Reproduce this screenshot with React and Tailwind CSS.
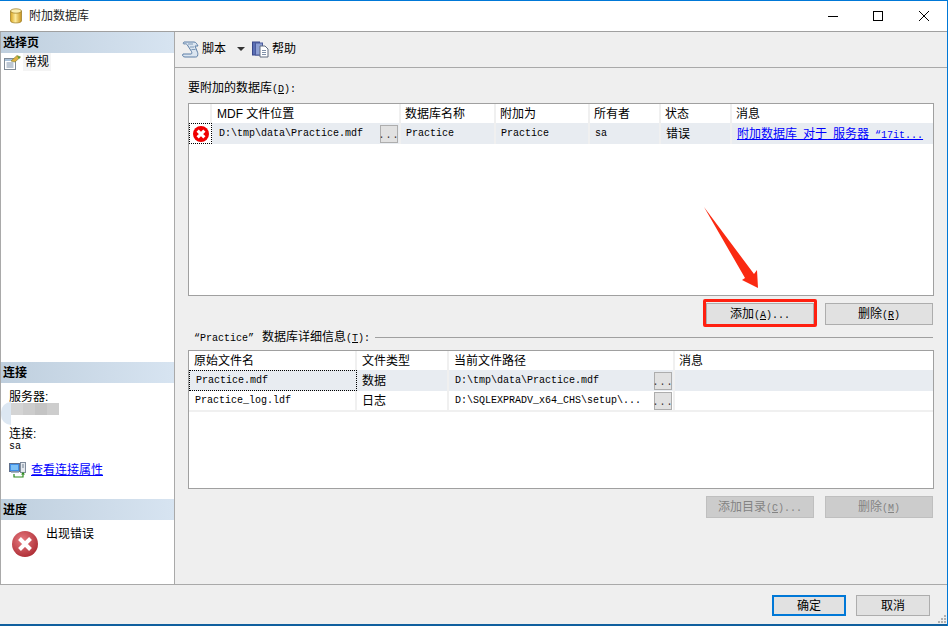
const sans = "font-['Liberation_Sans','Noto_Sans_CJK_SC',sans-serif]";
const mono = "font-['Liberation_Mono','Noto_Sans_CJK_SC',monospace] text-[10px] whitespace-pre";

function ErrorIcon({ size = 18, flat = false }) {
  return (
    <svg width={size} height={size} viewBox="0 0 26 26">
      <defs>
        <radialGradient id="err" cx="40%" cy="35%" r="75%">
          <stop offset="0%" stopColor="#e77a80" />
          <stop offset="100%" stopColor="#a8262e" />
        </radialGradient>
      </defs>
      <circle cx="13" cy="13" r="13" fill={flat ? "#f00000" : "url(#err)"} />
      <path d="M7.5 7.5 L18.5 18.5 M18.5 7.5 L7.5 18.5" stroke="#fff" strokeWidth={flat ? 5 : 4} />
    </svg>
  );
}

function DbIcon() {
  return (
    <svg width="12" height="16" viewBox="0 0 12 16">
      <defs>
        <linearGradient id="db" x1="0" x2="1" y1="0" y2="0">
          <stop offset="0%" stopColor="#d9a520" />
          <stop offset="45%" stopColor="#fdeb9c" />
          <stop offset="100%" stopColor="#c8921a" />
        </linearGradient>
      </defs>
      <path d="M0.5 3 V13 C0.5 15.6 11.5 15.6 11.5 13 V3 Z" fill="url(#db)" stroke="#9a7a20" strokeWidth="0.7" />
      <ellipse cx="6" cy="3" rx="5.5" ry="2.2" fill="#fbeeb0" stroke="#9a7a20" strokeWidth="0.7" />
    </svg>
  );
}

function ScriptIcon() {
  return (
    <svg width="17" height="17" viewBox="0 0 17 17">
      <path d="M2 1 H12 C14 1 15 3 16 5 H13 L15 10 C16 12 16 13 15.5 15 C15 16 14 16 13 16 H3 C1 16 0 14.5 1 13 H9 C10 13 10 11.5 9.5 10.5 L6 5 C5 3 4 2.5 2 3 C1 3 1 1.5 2 1 Z" fill="#dbe5f0" stroke="#5d7fa6" strokeWidth="1" />
      <path d="M6 3 H11 M8 6 H12 M9.5 8.5 H13.5" stroke="#7f9ab8" strokeWidth="1" />
    </svg>
  );
}

function HelpIcon() {
  return (
    <svg width="17" height="17" viewBox="0 0 17 17">
      <rect x="0.5" y="1" width="7" height="13" fill="#5a6fb5" stroke="#38478a" />
      <rect x="3.5" y="2" width="7" height="12" fill="#8ea0d4" stroke="#4a5a9c" />
      <path d="M8 5 H13 L16 8 V16 H8 Z" fill="#fff" stroke="#606c80" />
      <path d="M10 9.5 H14 M10 11.5 H14 M10 13.5 H14" stroke="#8090a8" />
    </svg>
  );
}

function PageIcon() {
  return (
    <svg width="17" height="15" viewBox="0 0 17 15">
      <rect x="0.5" y="3.5" width="11" height="11" fill="#fff" stroke="#7f8a96" />
      <rect x="1" y="4" width="10" height="2" fill="#a8c0d8" />
      <path d="M2.5 8 H9.5 M2.5 10 H9.5 M2.5 12 H9.5" stroke="#7a8fa8" />
      <path d="M7 6 L13 0.5 L16.5 2 L11 7 Z" fill="#e0b040" stroke="#7c8030" strokeWidth="0.6" />
      <path d="M13 1 L16.5 2 L15 4 Z" fill="#5c9a3c" />
    </svg>
  );
}

function ConnIcon() {
  return (
    <svg width="17" height="16" viewBox="0 0 17 16">
      <rect x="0.5" y="1.5" width="10" height="8" fill="#3f8fe8" stroke="#60708c" />
      <rect x="2" y="3" width="7" height="5" fill="#7cc0f6" />
      <rect x="2" y="9.5" width="8" height="1.5" fill="#a8b4c4" />
      <rect x="11.5" y="0.5" width="5" height="10" fill="#e4e8ee" stroke="#808c9c" />
      <path d="M13 3 H15 M13 5 H15" stroke="#708090" />
      <path d="M5 12 V15 H14 V11" fill="none" stroke="#2e8b1e" strokeWidth="1.2" />
      <path d="M12 12.5 L14 10 L16 12.5 Z" fill="#2e8b1e" />
    </svg>
  );
}

function Win({ type }) {
  return (
    <svg width="12" height="12" viewBox="0 0 12 12" fill="none" stroke="#000" strokeWidth="1">
      {type === "min" && <path d="M1 6.5 H11" />}
      {type === "max" && <rect x="1.5" y="1.5" width="9" height="9" />}
      {type === "close" && <path d="M1 1 L11 11 M11 1 L1 11" />}
    </svg>
  );
}

function SideHead({ children }) {
  return (
    <div className="h-[21px] px-[2px] flex items-center text-[12px] font-bold text-black bg-gradient-to-r from-[#bfcfde] to-[#d7e4f1]">
      {children}
    </div>
  );
}

function DotsBtn() {
  return (
    <div className="w-[18px] h-[18px] shrink-0 bg-[#e1e1e1] border border-[#adadad] flex items-end justify-center text-[10px] leading-[12px] tracking-[1px] text-[#333]">
      ...
    </div>
  );
}

function Btn({ children, disabled, className = "" }) {
  return (
    <div
      className={
        "h-[22px] w-[108px] flex items-center justify-center text-[12px] border " +
        (disabled
          ? "bg-[#cccccc] border-[#bfbfbf] text-[#838383] "
          : "bg-[#e1e1e1] border-[#adadad] text-black ") +
        className
      }
    >
      <span>{children}</span>
    </div>
  );
}

function Key({ k, tail = "" }) {
  return (
    <span className={mono}>
      (<span className="underline">{k}</span>){tail}
    </span>
  );
}

function Cell({ w, children, border = true, pad = "pl-[5px]", cls = "" }) {
  return (
    <div
      className={
        "h-full shrink-0 flex items-center overflow-hidden whitespace-nowrap " +
        pad + " " + (border ? "border-r-2 border-[#f0f0f0] " : "") + cls
      }
      style={{ width: w }}
    >
      {children}
    </div>
  );
}

const topCols = [23, 189, 95, 94, 71, 71, 202];
const botCols = [168, 92, 226, 259];

export default function App() {
  return (
    <div className={"relative w-[948px] h-[626px] overflow-hidden bg-[#efefef] text-black flex flex-col border-t border-r border-[#0078d7] " + sans}>
      {/* title bar */}
      <div className="h-[31px] bg-white flex items-center shrink-0 border-b border-[#a0a0a0]">
        <div className="w-[29px] pl-[10px] flex items-center"><DbIcon /></div>
        <div className="text-[12px] text-[#222]">附加数据库</div>
        <div className="ml-auto flex items-center">
          <div className="w-[46px] flex justify-center -mr-[1px]"><Win type="min" /></div>
          <div className="w-[46px] flex justify-center"><Win type="max" /></div>
          <div className="w-[46px] flex justify-center"><Win type="close" /></div>
        </div>
      </div>

      <div className="flex flex-1 min-h-0">
        {/* sidebar */}
        <div className="w-[175px] shrink-0 bg-white border-l border-r border-b border-[#a9a9a9] flex flex-col">
          <SideHead>选择页</SideHead>
          <div className="h-[309px] pl-[3px] pt-[1px]">
            <div className="flex items-center gap-[2px] h-[16px] text-[12px]">
              <PageIcon />
              <span className="bg-[#f4f4f4] px-[2px]">常规</span>
            </div>
          </div>
          <SideHead>连接</SideHead>
          <div className="h-[116px] relative">
            <div className="pl-[8px] pt-[7px] text-[12px] leading-[14px]">服务器:</div>
            <div className="ml-[10px] -mt-[1px] h-[12px] w-[48px] flex relative">
              <div className="w-[12px] bg-[#d4d4d4]" />
              <div className="w-[12px] bg-[#cccccc]" />
              <div className="w-[12px] bg-[#c4c4c4]" />
              <div className="w-[12px] bg-[#cdcdcd]" />
            </div>
            <div className="absolute left-0 top-[19px] w-[10px] h-[23px] rounded-l-full bg-[#dce7f2]" />
            <div className="pl-[8px] mt-[12px] text-[12px] leading-[14px]">连接:</div>
            <div className={"pl-[8px] leading-[12px] " + mono}>sa</div>
            <div className="pl-[8px] mt-[8px] flex items-center gap-[5px] text-[12px] text-[#0000ff] underline">
              <ConnIcon />
              <span>查看连接属性</span>
            </div>
          </div>
          <SideHead>进度</SideHead>
          <div className="flex-1 flex pl-[11px] pt-[11px] gap-[8px]">
            <ErrorIcon size={26} />
            <div className="text-[12px] leading-[14px] -mt-[4px]">出现错误</div>
          </div>
        </div>

        {/* main */}
        <div className="flex-1 min-w-0 flex flex-col border-b border-[#a9a9a9]">
          <div className="h-[36px] shrink-0 border-b border-[#a9a9a9] flex items-center pl-[7px] text-[12px] pb-[1px]">
            <ScriptIcon />
            <span className="ml-[3px]">脚本</span>
            <span className="ml-[11px] w-0 h-0 border-x-[4px] border-x-transparent border-t-[4px] border-t-[#333]" />
            <span className="ml-[7px]"><HelpIcon /></span>
            <span className="ml-[3px]">帮助</span>
          </div>

          <div className="flex-1 pl-[13px] pr-[14px] flex flex-col">
            <div className="h-[35px] flex items-end pb-[6px] text-[12px] leading-[14px]">
              <span>要附加的数据库<Key k="D" tail=":" /></span>
            </div>

            <div className="h-[193px] w-[746px] bg-white border border-[#a0a0a0] flex flex-col shrink-0 text-[12px]">
              <div className="h-[19px] flex shrink-0">
                {["", "MDF 文件位置", "数据库名称", "附加为", "所有者", "状态", "消息"].map((h, i) => (
                  <Cell key={i} w={topCols[i]} pad={i === 1 ? "pl-[5px]" : "pl-[4px]"} border={i < 6}>{h}</Cell>
                ))}
              </div>
              <div className="h-[21px] flex shrink-0 bg-[#e8ecf1]">
                <div className="w-[23px] h-full shrink-0 bg-white border border-dotted border-black flex items-center justify-center">
                  <ErrorIcon size={16} flat />
                </div>
                <Cell w={189} pad="pl-[7px]" cls={"justify-between pr-[1px] " + mono}>
                  <span>D:\tmp\data\Practice.mdf</span>
                  <DotsBtn />
                </Cell>
                <Cell w={95} cls={mono}>Practice</Cell>
                <Cell w={94} cls={mono}>Practice</Cell>
                <Cell w={71} cls={mono}>sa</Cell>
                <Cell w={71}>错误</Cell>
                <Cell w={200} border={false} cls="text-[#0000ff]">
                  <span className="underline">
                    附加数据库<span className={mono}> </span>对于<span className={mono}> </span>服务器<span className={mono}> “17it...</span>
                  </span>
                </Cell>
              </div>
            </div>

            <div className="h-[22px] mt-[7px] flex justify-end gap-[11px] shrink-0">
              <Btn>添加<Key k="A" tail="..." /></Btn>
              <Btn>删除<Key k="R" /></Btn>
            </div>

            <div className="h-[14px] mt-[5px] flex items-center gap-[5px] text-[12px] shrink-0 pl-[6px]">
              <span className="whitespace-nowrap">
                <span className={mono}>“Practice”</span>
                <span className="ml-[8px]">数据库详细信息</span>
                <Key k="T" tail=":" />
              </span>
              <div className="flex-1 h-px bg-[#a0a0a0]" />
            </div>

            <div className="h-[139px] w-[746px] mt-[6px] bg-white border border-[#a0a0a0] flex flex-col shrink-0 text-[12px]">
              <div className="h-[19px] flex shrink-0">
                {["原始文件名", "文件类型", "当前文件路径", "消息"].map((h, i) => (
                  <Cell key={i} w={botCols[i]} pad={i === 3 ? "pl-[4px]" : "pl-[5px]"} border={i < 3}>{h}</Cell>
                ))}
              </div>
              <div className="h-[21px] flex shrink-0 bg-[#e8ecf1]">
                <Cell w={168} border={false} pad="pl-[6px]" cls={"bg-[#e8ecf1] border border-dotted border-black " + mono}>Practice.mdf</Cell>
                <Cell w={92}>数据</Cell>
                <Cell w={226} pad="pl-[6px]" cls={"justify-between pr-[1px] " + mono}>
                  <span>D:\tmp\data\Practice.mdf</span>
                  <DotsBtn />
                </Cell>
                <Cell w={259} border={false} />
              </div>
              <div className="h-[21px] flex shrink-0 border-b-2 border-[#f0f0f0]">
                <Cell w={168} pad="pl-[6px]" cls={mono}>Practice_log.ldf</Cell>
                <Cell w={92}>日志</Cell>
                <Cell w={226} pad="pl-[6px]" cls={"justify-between pr-[1px] " + mono}>
                  <span>D:\SQLEXPRADV_x64_CHS\setup\...</span>
                  <DotsBtn />
                </Cell>
                <Cell w={259} border={false} />
              </div>
            </div>

            <div className="h-[22px] mt-[7px] flex justify-end gap-[11px] shrink-0">
              <Btn disabled>添加目录<Key k="C" tail="..." /></Btn>
              <Btn disabled>删除<Key k="M" /></Btn>
            </div>
          </div>
        </div>
      </div>

      {/* footer */}
      <div className="h-[41px] shrink-0 relative flex items-start justify-end gap-[10px] pt-[10px] pr-[17px] border-b-2 border-[#0f5f9e]">
        <div className="w-[74px] h-[21px] bg-[#e1e1e1] border-2 border-[#0078d7] flex items-center justify-center text-[12px]">确定</div>
        <div className="w-[74px] h-[21px] bg-[#e1e1e1] border border-[#adadad] flex items-center justify-center text-[12px]">取消</div>
        <svg className="absolute right-0 bottom-0" width="10" height="10" viewBox="0 0 10 10" fill="#b0b0b0">
          <rect x="7" y="1" width="2" height="2" />
          <rect x="4" y="4" width="2" height="2" />
          <rect x="7" y="4" width="2" height="2" />
          <rect x="1" y="7" width="2" height="2" />
          <rect x="4" y="7" width="2" height="2" />
          <rect x="7" y="7" width="2" height="2" />
        </svg>
      </div>

      {/* annotation over the screenshot */}
      <div className="absolute left-[703px] top-[298px] w-[114px] h-[28px] border-[3px] border-[#ff2010] rounded-[2px]" />
      <svg className="absolute left-[700px] top-[203px]" width="64" height="88" viewBox="0 0 64 88">
        <path d="M4 3 L54 70 L57 66 L58 84 L42 76 L45 74 Z" fill="#fa2a12" />
      </svg>
    </div>
  );
}
